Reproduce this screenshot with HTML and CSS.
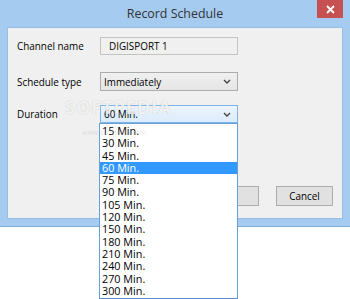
FILE: index.html
```html
<!DOCTYPE html>
<html lang="en">

<head>
    <meta charset="UTF-8">
    <title>Record Schedule</title>
    <link rel="stylesheet" href="styles.css">
</head>

<body>
    <div class="window">
        <div class="titlebar">
            <span class="title">Record Schedule</span>
            <div class="close-btn">
                <svg width="9" height="9" viewBox="0 0 9 9">
                    <path d="M1 1 L8 8 M8 1 L1 8" stroke="#fff" stroke-width="1.8" />
                </svg>
            </div>
        </div>
        <div class="content">
            <div class="row">
                <label>Channel name</label>
                <div class="field">DIGISPORT 1</div>
            </div>
            <div class="row row-type">
                <label>Schedule type</label>
                <div class="select">
                    <span>Immediately</span>
                    <svg class="chevron" width="8" height="5" viewBox="0 0 8 5">
                        <path d="M1 1 L4 4 L7 1" fill="none" stroke="#444" stroke-width="1.4" />
                    </svg>
                </div>
            </div>
            <div class="row row-duration">
                <label>Duration</label>
                <div class="select select-active">
                    <span>60 Min.</span>
                    <svg class="chevron" width="8" height="5" viewBox="0 0 8 5">
                        <path d="M1 1 L4 4 L7 1" fill="none" stroke="#444" stroke-width="1.4" />
                    </svg>
                </div>
            </div>
            <div class="buttons">
                <div class="btn">OK</div>
                <div class="btn">Cancel</div>
            </div>
            <div class="watermark">SOFTPEDIA</div>
        </div>
    </div>

    <ul class="dropdown">
        <li>15 Min.</li>
        <li>30 Min.</li>
        <li>45 Min.</li>
        <li class="selected">60 Min.</li>
        <li>75 Min.</li>
        <li>90 Min.</li>
        <li>105 Min.</li>
        <li>120 Min.</li>
        <li>150 Min.</li>
        <li>180 Min.</li>
        <li>210 Min.</li>
        <li>240 Min.</li>
        <li>270 Min.</li>
        <li>300 Min.</li>
    </ul>
    <div class="watermark-url">www.softpedia.com</div>
</body>

</html>
```

FILE: styles.css
```css
body {
    margin: 0;
    padding: 0;
    background-color: #fff;
    font-family: 'Open Sans', 'Noto Sans', sans-serif;
    position: relative;
    height: 299px;
    overflow: hidden;
}

.window {
    width: 350px;
    height: 227px;
    box-sizing: border-box;
    background-color: #a5cbf0;
    border-bottom: 1px solid #7fa9d6;
    padding: 0 7px 7px 7px;
    display: flex;
    flex-direction: column;
}

.titlebar {
    height: 27px;
    display: flex;
    align-items: center;
    justify-content: center;
    position: relative;
}

.title {
    font-size: 12.4px;
    color: #333;
    margin-top: -1px;
}

.close-btn {
    position: absolute;
    top: 0;
    right: 0;
    width: 26px;
    height: 18px;
    background-color: #c75050;
    display: flex;
    align-items: center;
    justify-content: center;
}

.content {
    flex: 1;
    background-color: #f0f0f0;
    border: 1px solid #98bde3;
    padding: 9px 9px 0 9px;
    display: flex;
    flex-direction: column;
    position: relative;
}

.row {
    display: flex;
    align-items: center;
    height: 18px;
}

.row-type {
    margin-top: 17px;
    height: 19px;
}

.row-duration {
    margin-top: 14px;
}

label {
    width: 83px;
    font-size: 9.9px;
    color: #000;
}

.field {
    width: 138px;
    height: 18px;
    box-sizing: border-box;
    border: 1px solid #c4c4c4;
    background-color: #f0f0f0;
    font-size: 9.9px;
    padding-left: 8px;
    line-height: 16px;
    color: #000;
}

.select {
    width: 138px;
    height: 100%;
    box-sizing: border-box;
    border: 1px solid #acacac;
    background: linear-gradient(#f0f0f0, #e5e5e5);
    font-size: 9.9px;
    padding: 0 6px 0 3px;
    display: flex;
    align-items: center;
    justify-content: space-between;
    color: #000;
}

.select-active {
    border-color: #7eb4ea;
    background: linear-gradient(#ecf4fc, #dcecfc);
}

.buttons {
    margin-top: auto;
    margin-bottom: 12px;
    display: flex;
    justify-content: flex-end;
    gap: 17px;
}

.btn {
    width: 57px;
    height: 20px;
    box-sizing: border-box;
    border: 1px solid #adadad;
    background-color: #e1e1e1;
    font-size: 9.9px;
    display: flex;
    align-items: center;
    justify-content: center;
    color: #000;
}

.watermark {
    position: absolute;
    left: 57px;
    top: 67px;
    font-size: 18px;
    font-weight: bold;
    letter-spacing: 1px;
    color: rgba(255, 255, 255, 0.8);
    text-shadow: 0 0 1px rgba(120, 120, 120, 0.45);
}

.dropdown {
    position: absolute;
    left: 99px;
    top: 123px;
    width: 139px;
    height: 176px;
    box-sizing: border-box;
    margin: 0;
    padding: 1px 0 0 0;
    list-style: none;
    background-color: #fff;
    border: 1px solid #6a9fd6;
    border-bottom-color: #5a8fcf;
}

.dropdown li {
    font-size: 10.8px;
    height: 12.3px;
    line-height: 12.3px;
    padding-left: 2px;
    color: #000;
}

.dropdown li.selected {
    background-color: #3399ff;
    color: #fff;
}

.watermark-url {
    position: absolute;
    left: 82px;
    top: 128px;
    font-size: 7px;
    color: rgba(180, 180, 180, 0.35);
}
```
